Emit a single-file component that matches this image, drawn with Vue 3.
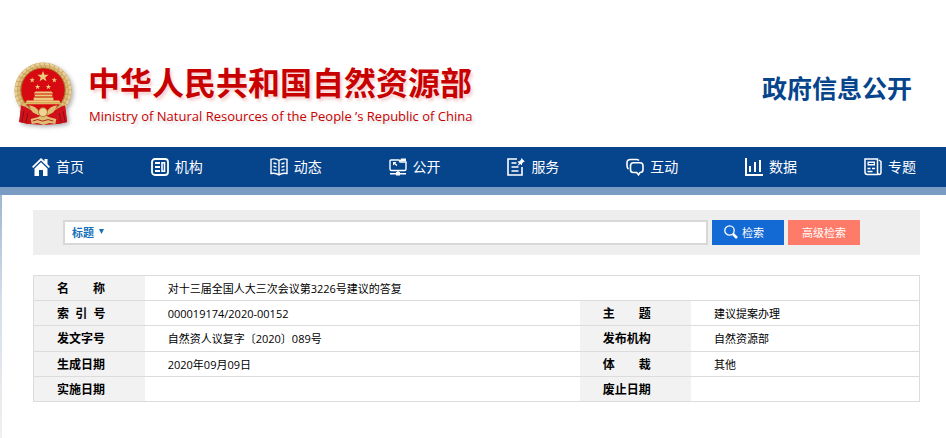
<script setup>
import { ref } from 'vue'

const navItems = [
  { label: '首页', icon: 'home' },
  { label: '机构', icon: 'org' },
  { label: '动态', icon: 'book' },
  { label: '公开', icon: 'open' },
  { label: '服务', icon: 'service' },
  { label: '互动', icon: 'chat' },
  { label: '数据', icon: 'data' },
  { label: '专题', icon: 'topic' }
]

const rows = [
  ['索\u00a0\u00a0引\u00a0\u00a0号', '000019174/2020-00152', '主\u3000\u3000题', '建议提案办理'],
  ['发文字号', '自然资人议复字〔2020〕089号', '发布机构', '自然资源部'],
  ['生成日期', '2020年09月09日', '体\u3000\u3000裁', '其他'],
  ['实施日期', '', '废止日期', '']
]

const field = ref('标题')
const keyword = ref('')
</script>

<template>
  <div class="page">
    <header class="header">
      <div class="brand">
        <svg class="emblem" viewBox="0 0 62 66" aria-hidden="true">
          <path d="M9 42 L6 61 L17 63 L31 64 L45 63 L55 61 L52 42Z" fill="#c8101a" />
          <ellipse cx="30.500" cy="29" rx="29" ry="28.500" fill="#c9a35c" />
          <ellipse cx="30.500" cy="29" rx="27.500" ry="27" fill="none" stroke="#e9cf98" stroke-width="2.500" stroke-dasharray="4 1" />
          <ellipse cx="30.500" cy="29" rx="24.500" ry="24" fill="none" stroke="#dcbb78" stroke-width="2.500" stroke-dasharray="3 1.500" />
          <ellipse cx="30.500" cy="28.500" rx="22.500" ry="22.500" fill="#d60a10" stroke="#a8742a" />
          <g fill="#eccb7c">
            <path d="M30.500 9l1.400 4h4.200l-3.300 2.600 1.200 4-3.500-2.400-3.500 2.400 1.200-4-3.300-2.600h4.200z" />
            <path d="M19.500 15.500l.7 1.900h2l-1.600 1.300.6 2-1.700-1.200-1.700 1.200.6-2-1.600-1.300h2z" />
            <path d="M42 15.500l.7 1.900h2l-1.600 1.300.6 2-1.700-1.200-1.700 1.200.6-2-1.600-1.300h2z" />
            <path d="M25 22.500l.7 1.900h2l-1.600 1.300.6 2-1.700-1.200-1.700 1.200.6-2-1.600-1.300h2z" />
            <path d="M36 22.500l.7 1.900h2l-1.600 1.300.6 2-1.700-1.200-1.700 1.200.6-2-1.600-1.300h2z" />
            <path d="M23 30h16l2 2H21zM22 33h18v2H22zM21 36h20v3H21z" />
            <path d="M14 39h33l2 4H12z" />
          </g>
          <path d="M13 41.500h36M22 35.500h18" stroke="#b97c28" stroke-width=".7" />
          <path d="M8 44q9 3 14 8q8 5 17 0q5-5 14-8l2 17-9 2-6-5q-9 3-18 0l-7 5-8-2z" fill="#cf111a" />
          <path d="M16 44q8 1 10 6q4 3 9 0q2-5 10-6l-4 7q-10 7-21 0z" fill="#e0bc74" />
          <path d="M18 58l7-2q6-4 12 0l7 2-1 5-6-1-6 2-6-2-6 1z" fill="#e0bc74" />
          <circle cx="30.500" cy="51" r="4.500" fill="#efd294" stroke="#af7a2c" />
          <path d="M20 60q5-3 10 0q6-3 11 0" fill="none" stroke="#b3241c" />
          <path d="M11 50l-2 11M15 52l-2 10M47 52l2 10M51 50l2 11" stroke="#8d0c14" />
        </svg>
        <div class="names">
          <h1 class="name">中华人民共和国自然资源部</h1>
          <p class="name-en">Ministry of Natural Resources of the People&nbsp;’s Republic of China</p>
        </div>
      </div>
      <h2 class="section">政府信息公开</h2>
    </header>

    <nav class="nav">
      <a v-for="item in navItems" :key="item.icon" class="nav-item" href="#">
        <svg class="nav-icon" viewBox="0 0 18 18" aria-hidden="true">
          <g v-if="item.icon === 'home'" fill="#fff">
            <path d="M9 0l3.500 3.300V1h3v5.200L18 8.700l-1.200 1.200L9 2.500 1.200 9.900 0 8.700z" />
            <path d="M9 4.300l6.500 6.200V18H11v-6H7v6H2.500v-7.500z" />
          </g>
          <g v-else-if="item.icon === 'org'" fill="none" stroke="#fff">
            <rect x="1" y="1" width="16" height="16" rx="3" stroke-width="1.800" />
            <path d="M4 5h5M4 9h5M4 13h5" stroke-width="1.800" />
            <rect x="11" y="4.800" width="2.500" height="8.400" stroke-width="1.600" />
          </g>
          <g v-else-if="item.icon === 'book'" fill="none" stroke="#fff" stroke-width="1.400">
            <path d="M9 2.500Q5.500 0 1 1.300v14.200Q6 14.500 9 17q3-2.500 8-1.500V1.300Q12.500 0 9 2.500zV17" />
            <path d="M3.500 5l3 .8M3.500 8.300l3 .8M3.500 11.600l3 .8M14.500 5l-3 .8M14.500 8.300l-3 .8M14.500 11.600l-3 .8" />
          </g>
          <g v-else-if="item.icon === 'open'" fill="none" stroke="#fff" stroke-width="1.400">
            <path d="M10 2H2Q1 2 1 3v8q0 1.500 1.500 1.500h13Q17 12.500 17 11V4h-6z" />
            <path d="M10.500 3.500L12 .5h5V3z" fill="#fff" stroke="none" />
            <path d="M9 12.500V15M1 15.700h16" />
            <path d="M5 5l3 2.500" />
            <path d="M4 4h3.500L4 7.500zM7 14h4v3.500H7z" fill="#fff" stroke="none" />
          </g>
          <g v-else-if="item.icon === 'service'" fill="none" stroke="#fff" stroke-width="1.600">
            <path d="M10 1H1v16h14V9" />
            <path d="M4.500 5h5M4.500 9h7M4.500 13h7" />
            <path d="M14.300 0l3.500 3.500-1.300.5-1.500 1.500v2L13.300 6 10 8.500l2-3.300-1.600-1.600 2.100-.4L13.800 2z" fill="#fff" stroke="none" />
          </g>
          <g v-else-if="item.icon === 'chat'" fill="none" stroke="#fff" stroke-width="1.600">
            <path d="M2.500 11Q1 10 1 7.500V5q0-3.500 3.500-3.500h6q1.500 0 2.500 1" />
            <path d="M7.500 4.700h6.500q3 0 3 3v4q0 2.800-3 2.800l-1.500 2.300-1.800-2.300H7.500q-3 0-3-2.800v-4q0-3 3-3z" />
          </g>
          <g v-else-if="item.icon === 'data'" fill="none" stroke="#fff" stroke-width="2">
            <path d="M1 0v17h17M5 8v6M10 4v10M15 2v12" />
          </g>
          <g v-else fill="none" stroke="#fff" stroke-width="1.500">
            <path d="M14 16.500H3.500q-2.500 0-2.500-2.500V1h12.500v13q0 2.500 1.700 2.500T17 14V3.500L15 2" />
            <path d="M3.500 3.500h7.500v4H3.500z" fill="#fff" stroke="none" />
            <path d="M4.800 5.500h5" stroke="#06448c" stroke-width="1" />
            <path d="M3.500 10.500h3M3.500 13.500h5M8 10.500h3" stroke-width="1.300" />
          </g>
        </svg>
        <span>{{ item.label }}</span>
      </a>
    </nav>

    <main class="main">
      <form class="search" @submit.prevent>
        <div class="query">
          <div class="picker">
            <select v-model="field" class="field" aria-label="检索字段">
              <option>标题</option>
            </select>
            <svg class="arrow" viewBox="0 0 5 5" aria-hidden="true"><path d="M0 0h5L2.500 5z" fill="#1470b8" /></svg>
          </div>
          <input v-model="keyword" class="keyword" type="text" aria-label="检索内容" />
        </div>
        <button class="btn primary" type="submit">
          <svg class="lens" viewBox="0 0 14 14" aria-hidden="true">
            <circle cx="5.500" cy="5.500" r="4.700" fill="none" stroke="#fff" stroke-width="1.300" />
            <path d="M9 9l4 4" stroke="#fff" stroke-width="2.500" />
          </svg>
          检索
        </button>
        <button class="btn advanced" type="button">高级检索</button>
      </form>

      <table class="info">
        <colgroup>
          <col class="c-label" />
          <col class="c-wide" />
          <col class="c-label" />
          <col class="c-rest" />
        </colgroup>
        <tbody>
          <tr>
            <th scope="row">名&#x3000;&#x3000;称</th>
            <td colspan="3">对十三届全国人大三次会议第3226号建议的答复</td>
          </tr>
          <tr v-for="row in rows" :key="row[0]">
            <th scope="row">{{ row[0] }}</th>
            <td>{{ row[1] }}</td>
            <th scope="row">{{ row[2] }}</th>
            <td>{{ row[3] }}</td>
          </tr>
        </tbody>
      </table>
    </main>
  </div>
</template>

<style>
body {
  margin: 0;
  background: #fff;
}
</style>

<style scoped>
.page {
  display: flex;
  flex-direction: column;
  min-height: 100vh;
  font-family: "Open Sans", "Noto Sans CJK SC", sans-serif;
  font-size: 11px;
  color: #000;
}

.header {
  display: flex;
  justify-content: space-between;
  align-items: flex-start;
  padding: 62px 34px 20px 13px;
}

.brand {
  display: flex;
  gap: 14px;
}

.emblem {
  width: 61px;
  height: 65px;
  filter: drop-shadow(2px 2px 2px rgba(0, 0, 0, 0.3));
}

.names {
  display: flex;
  flex-direction: column;
  gap: 2px;
}

.name {
  margin: 0;
  font-size: 32px;
  line-height: 42px;
  font-weight: 700;
  color: #c80000;
  text-shadow: 2px 3px 3px rgba(200, 0, 0, 0.18);
  white-space: nowrap;
}

.name-en {
  margin: 0;
  padding-left: 1px;
  font-size: 13px;
  line-height: 20px;
  color: #c80000;
  text-shadow: 2px 3px 3px rgba(0, 0, 0, 0.15);
  white-space: nowrap;
}

.section {
  margin: 8px 0 0;
  font-size: 25px;
  line-height: 36px;
  font-weight: 700;
  color: #06448c;
  white-space: nowrap;
}

.nav {
  display: flex;
  justify-content: space-between;
  align-items: center;
  height: 40px;
  padding: 0 30px 0 32px;
  background: #06448c;
  border-bottom: 8px solid #7a9bc3;
}

.nav-item {
  display: flex;
  align-items: center;
  gap: 6px;
  color: #fff;
  font-size: 14px;
  line-height: 20px;
  text-decoration: none;
}

.nav-icon {
  width: 18px;
  height: 18px;
}

.main {
  flex: 1;
  padding: 15px 26px 20px 33px;
  background: linear-gradient(#9fb5d2, #d4dde9 100px, #f0f0f0) left top / 2px 100% no-repeat;
}

.search {
  display: flex;
  align-items: flex-start;
  gap: 4px;
  padding: 10px 60px 10px 30px;
  background: #eee;
}

.query {
  flex: 1;
  display: flex;
  box-sizing: border-box;
  height: 25px;
  border: 2px solid #d8d8d8;
  background: #fff;
}

.picker {
  display: flex;
  align-items: center;
  padding: 0 0 2px 7px;
  gap: 5px;
}

.field {
  appearance: none;
  margin: 0;
  padding: 0;
  border: 0;
  background: transparent;
  font: 700 11px/18px "Noto Sans CJK SC", sans-serif;
  color: #1470b8;
}

.arrow {
  width: 5px;
  height: 5px;
}

.keyword {
  flex: 1;
  min-width: 0;
  padding: 0 8px;
  border: 0;
  outline: 0;
  font: inherit;
}

.btn {
  display: flex;
  align-items: center;
  justify-content: center;
  gap: 4px;
  width: 72px;
  height: 25px;
  padding: 0 0 2px;
  border: 0;
  color: #fff;
  font-family: inherit;
  font-size: 11px;
}

.primary {
  justify-content: flex-start;
  padding-left: 12px;
  background: #146ad4;
}

.advanced {
  background: #ff7b69;
}

.lens {
  width: 14px;
  height: 14px;
}

.info {
  width: 100%;
  height: 127px;
  margin-top: 20px;
  border-collapse: collapse;
  table-layout: fixed;
  border: 1px solid #dcdcdc;
}

.c-label {
  width: 12.55%;
}

.c-wide {
  width: 49.1%;
}

.info tr {
  border-bottom: 1px solid #dcdcdc;
}

.info th,
.info td {
  padding: 2px 0 0 23px;
  text-align: left;
  line-height: 20px;
}

.info th {
  background: #f2f2f2;
  font-size: 12px;
  font-weight: 700;
}

.info td {
  font-weight: 400;
}
</style>
